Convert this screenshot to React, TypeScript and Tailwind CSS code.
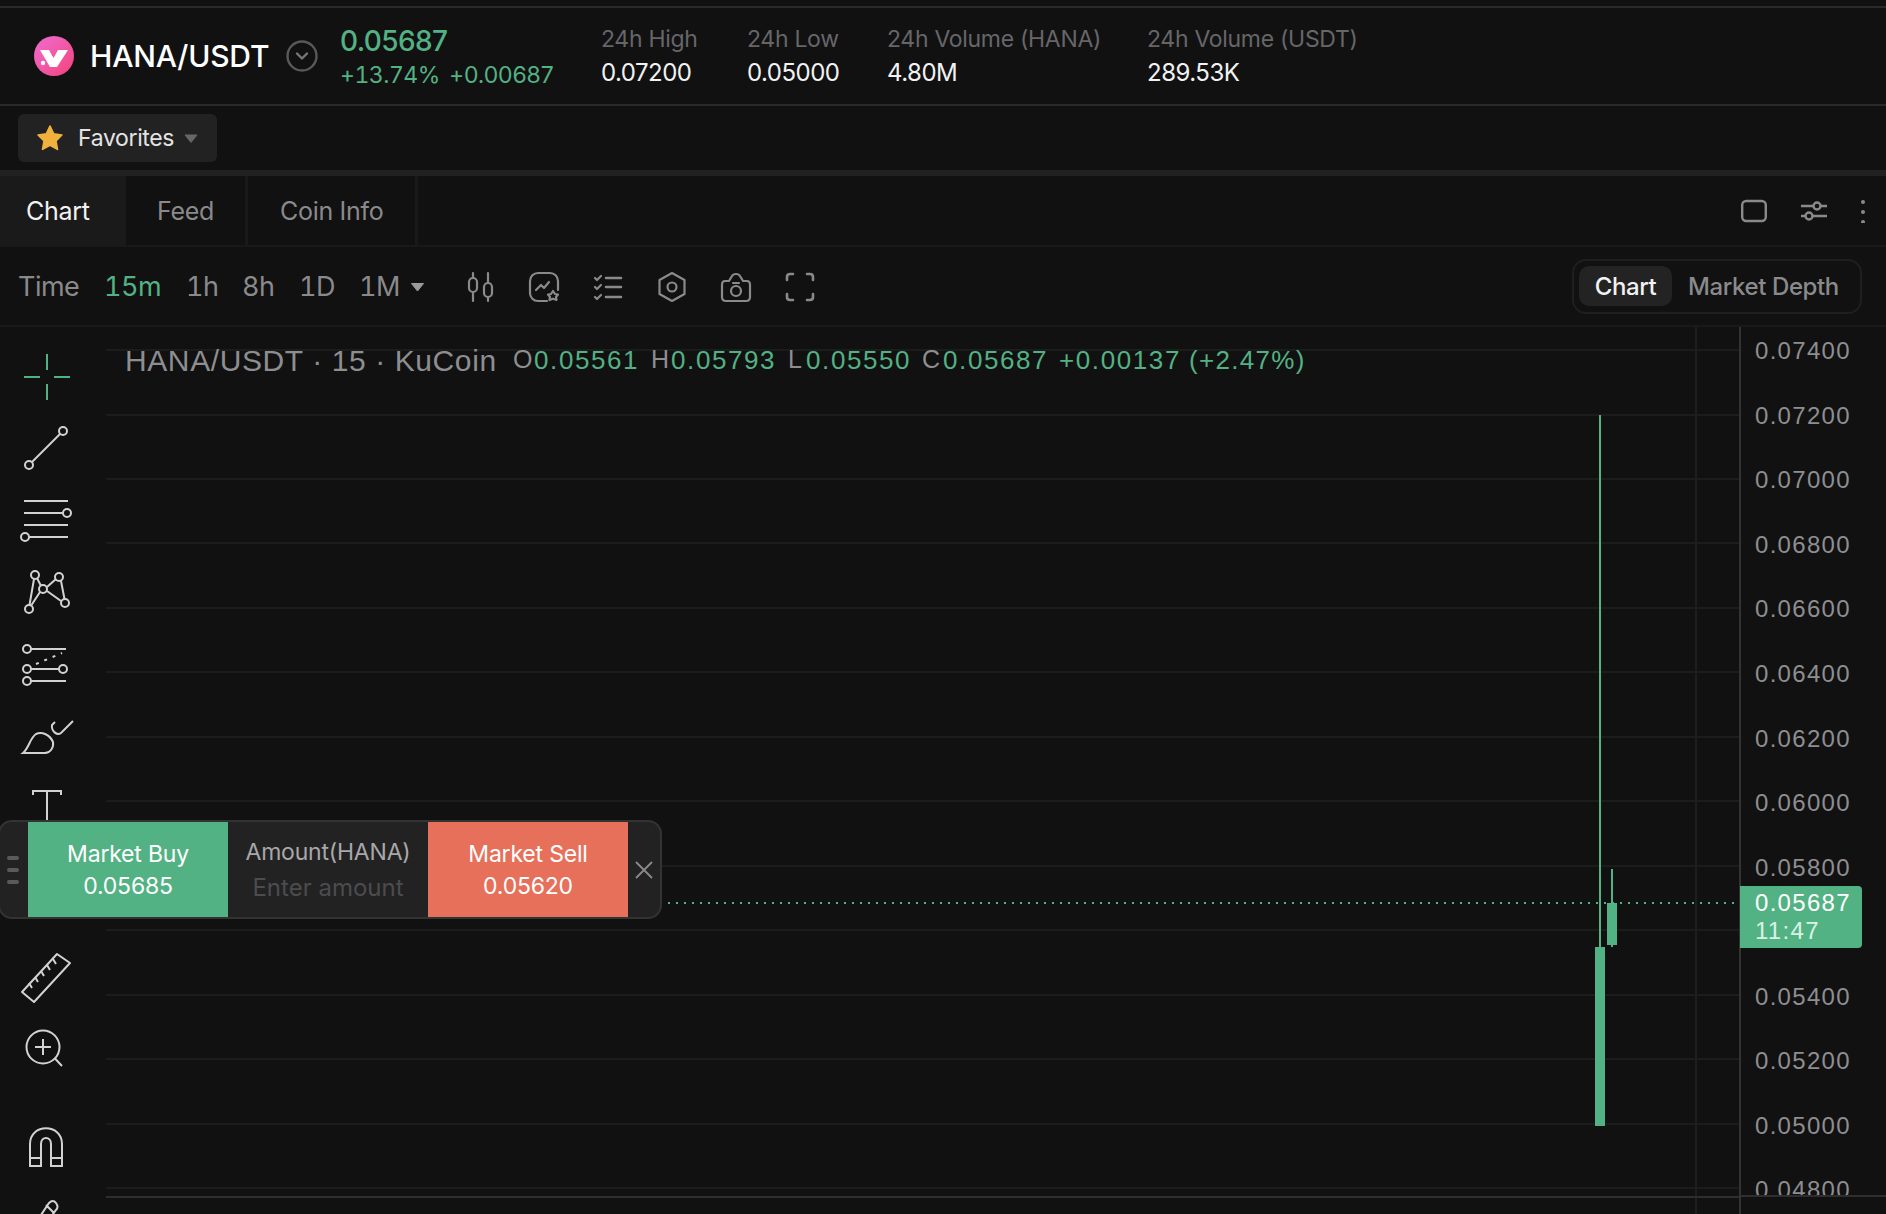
const GREEN = "#53b283";

const gridLines = [23, 88, 152, 216, 281, 345, 410, 474, 539, 603, 668, 732, 797, 861];
const axisLabels = ["0.07400", "0.07200", "0.07000", "0.06800", "0.06600", "0.06400", "0.06200", "0.06000", "0.05800", "", "0.05400", "0.05200", "0.05000", "0.04800"];

function Caret({ className }: { className: string }) {
  return (
    <svg viewBox="0 0 14 10" className={className} fill="currentColor">
      <path d="M1 1.500h12L7 9z" stroke="currentColor" strokeLinejoin="round" />
    </svg>
  );
}

function Stat({ label, value, className }: { label: string; value: string; className: string }) {
  return (
    <div className={className}>
      <div className="text-[23px] leading-[34px] text-[#666668] tracking-[-0.3px]">{label}</div>
      <div className="text-[24px] leading-[34px] text-[#f2f2f2] tracking-[-0.5px]">{value}</div>
    </div>
  );
}

function Header() {
  return (
    <div className="h-[98px] flex items-center border-b-[2px] border-[#2a2a2b]">
      <div className="ml-[34px] w-[40px] h-[40px] rounded-full bg-linear-to-br from-[#ee6bd2] to-[#f43f7a] shrink-0">
        <svg viewBox="0 0 40 40" className="w-[40px] h-[40px]" fill="#fff">
          <polygon points="6,14 15,14 19.500,22 24,14 34,14 23,31 16,31" />
          <circle cx="9" cy="27" r="2.200" />
        </svg>
      </div>
      <div className="ml-[16px] w-[178px] text-[30px] font-medium text-white tracking-[-0.2px] whitespace-nowrap">HANA/USDT</div>
      <svg viewBox="0 0 32 32" className="ml-[18px] w-[32px] h-[32px]" fill="none" stroke="#77777a" strokeWidth="2">
        <circle cx="16" cy="16" r="14.500" stroke="#59595b" strokeWidth="2.400" />
        <path d="M11 13.500l5 5 5-5" strokeWidth="2.400" strokeLinecap="round" strokeLinejoin="round" />
      </svg>
      <div className="ml-[22px] w-[261px]">
        <div className="text-[28px] leading-[38px] font-medium text-[#53b283] tracking-[-0.6px]">0.05687</div>
        <div className="flex text-[23px] leading-[30px] text-[#53b283]">
          <span className="w-[109px] tracking-[-0.5px] tabular-nums">+13.74%</span>
          <span className="tracking-[-0.15px]">+0.00687</span>
        </div>
      </div>
      <Stat label="24h High" value="0.07200" className="w-[146px]" />
      <Stat label="24h Low" value="0.05000" className="w-[140px]" />
      <Stat label="24h Volume (HANA)" value="4.80M" className="w-[260px]" />
      <Stat label="24h Volume (USDT)" value="289.53K" className="w-[260px]" />
    </div>
  );
}

function FavoritesRow() {
  return (
    <div className="h-[70px] pt-[8px] pl-[18px] border-b-[6px] border-[#212122]">
      <div className="w-[199px] h-[48px] rounded-[6px] bg-[#222223] flex items-center pl-[19px]">
        <svg viewBox="0 0 24 24" className="w-[26px] h-[26px]">
          <path d="M12 1l3.400 7.200 7.600 1-5.500 5.400 1.400 7.900-6.900-3.800-6.900 3.800 1.400-7.900L1 9.200l7.600-1z" fill="#f0b23c" stroke="#f0b23c" strokeWidth="1.500" strokeLinejoin="round" />
        </svg>
        <span className="ml-[15px] text-[23px] text-[#e4e4e4] tracking-[-0.35px]">Favorites</span>
        <Caret className="ml-[10px] w-[14px] h-[11px] text-[#666668]" />
      </div>
    </div>
  );
}

function Tabs() {
  return (
    <div className="h-[71px] flex items-stretch border-b-[2px] border-[#19191a] text-[25px] tracking-[-0.3px]">
      <div className="w-[126px] bg-[#1a1a1b] flex items-center pl-[26px] pt-[2px] text-[#f2f2f2]">Chart</div>
      <div className="w-[122px] flex items-center pl-[31px] pt-[2px] text-[#8a8a8c] border-r-[3px] border-[#19191a]">Feed</div>
      <div className="w-[170px] flex items-center pl-[32px] pt-[2px] text-[#8a8a8c] border-r-[3px] border-[#19191a]">Coin Info</div>
      <div className="ml-auto flex items-center pr-[20px]">
        <svg viewBox="0 0 26 24" className="w-[26px] h-[24px]" fill="none" stroke="#8a8a8c" strokeWidth="2.400">
          <rect x="1.200" y="2" width="23.600" height="20" rx="4" />
        </svg>
        <svg viewBox="0 0 28 24" className="ml-[33px] w-[28px] h-[24px]" fill="none" stroke="#8a8a8c" strokeWidth="2.400">
          <path d="M1 7h12M21 7h6M1 17h4M13 17h14" />
          <circle cx="17" cy="7" r="3.500" />
          <circle cx="9" cy="17" r="3.500" />
        </svg>
        <svg viewBox="0 0 6 24" className="ml-[32px] w-[6px] h-[24px]" fill="#8a8a8c">
          <circle cx="3" cy="3" r="2" />
          <circle cx="3" cy="13" r="2" />
          <circle cx="3" cy="23" r="2" />
        </svg>
      </div>
    </div>
  );
}

const tbStroke = { fill: "none", stroke: "#8a8a8c", strokeWidth: 2.2, strokeLinecap: "round", strokeLinejoin: "round" } as const;

function Toolbar() {
  return (
    <div className="h-[80px] flex items-center pl-[18px] pt-[2px] border-b-[2px] border-[#19191a] text-[27px] text-[#8a8a8c] tracking-[-0.5px] tabular-nums">
      <span className="w-[86px]">Time</span>
      <span className="w-[82px] text-[#53b283]">15m</span>
      <span className="w-[56px]">1h</span>
      <span className="w-[57px]">8h</span>
      <span className="w-[60px]">1D</span>
      <span className="w-[51px]">1M</span>
      <Caret className="w-[15px] h-[10px] text-[#9a9a9c]" />
      <div className="ml-[37px] flex gap-[28px]">
        <svg viewBox="0 0 36 36" className="w-[36px] h-[36px]" {...tbStroke}>
          <path d="M11 4v28M26 4v28" />
          <rect x="7" y="9" width="8" height="14" rx="4" fill="#111112" />
          <rect x="22" y="14" width="8" height="14" rx="4" fill="#111112" />
        </svg>
        <svg viewBox="0 0 36 36" className="w-[36px] h-[36px]" {...tbStroke}>
          <path d="M21 32H12a8 8 0 0 1-8-8V12a8 8 0 0 1 8-8h12a8 8 0 0 1 8 8v9" />
          <path d="M10 21l5-5 3 3 5-6" />
          <path d="M27 22l2 3 3 .5-2 2.500.5 3-3.500-1.300-3.500 1.300.5-3-2-2.500 3-.5z" />
        </svg>
        <svg viewBox="0 0 36 36" className="w-[36px] h-[36px]" {...tbStroke}>
          <path d="M5 9l2 2 4-4M5 18l2 2 4-4M5 28l2 2 4-4" />
          <path d="M16 9h15M16 18h15M16 28h15" strokeWidth="2.600" />
        </svg>
        <svg viewBox="0 0 36 36" className="w-[36px] h-[36px]" {...tbStroke}>
          <path d="M18 4l12.500 7v14L18 32 5.500 25V11z" />
          <circle cx="18" cy="18" r="4.500" />
        </svg>
        <svg viewBox="0 0 36 36" className="w-[36px] h-[36px]" {...tbStroke}>
          <path d="M7 12h4l3-5q1-2 4-2t4 2l3 5h4q3 0 3 4v12q0 4-4 4H8q-4 0-4-4V16q0-4 3-4z" />
          <path d="M15 14h6" />
          <circle cx="18" cy="22" r="5" />
        </svg>
        <svg viewBox="0 0 36 36" className="w-[36px] h-[36px]" {...tbStroke}>
          <path d="M5 11V8q0-3 3-3h3M25 5h3q3 0 3 3v3M5 25v3q0 3 3 3h3M25 31h3q3 0 3-3v-3" strokeWidth="2.600" />
        </svg>
      </div>
      <div className="ml-auto -mt-[2px] mr-[24px] w-[290px] h-[55px] rounded-[14px] border-[2px] border-[#1f1f20] flex items-center pl-[5px] text-[24px] font-medium tracking-[-0.4px]">
        <div className="w-[93px] h-[40px] rounded-[10px] bg-[#232324] text-[#f2f2f2] flex items-center justify-center pt-[1px]">Chart</div>
        <div className="ml-[16px] pt-[1px] whitespace-nowrap text-[#8a8a8c]">Market Depth</div>
      </div>
    </div>
  );
}

const toolProps = { viewBox: "0 0 94 72", className: "w-[94px] h-[72px] block", fill: "none", stroke: "#d2d2d2", strokeWidth: 2 };

function ToolRail() {
  return (
    <div className="w-[106px] shrink-0 pt-[14px]">
      <svg {...toolProps} stroke={GREEN}>
        <path d="M24 36h16M54 36h16M47 13v16M47 43v16" />
      </svg>
      <svg {...toolProps}>
        <path d="M32 49l28-28" />
        <circle cx="63" cy="18" r="4" />
        <circle cx="29" cy="52" r="4" />
      </svg>
      <svg {...toolProps}>
        <path d="M24 16h44M24 28h39M24 40h44M29 52h39" />
        <circle cx="67" cy="28" r="4" />
        <circle cx="25" cy="52" r="4" />
      </svg>
      <svg {...toolProps}>
        <path d="M34 22l-4.500 26M37 21l4 8M40 35l-8.500 13M47 30l9-8M61 24l3.500 18M47 34l14 10" />
        <circle cx="35" cy="18" r="4" />
        <circle cx="59" cy="20" r="4" />
        <circle cx="43" cy="32" r="4" />
        <circle cx="29" cy="52" r="4" />
        <circle cx="65" cy="46" r="4" />
      </svg>
      <svg {...toolProps}>
        <path d="M31 20h35M31 40h28M31 52h35" />
        <path d="M36 35l26-11" strokeDasharray="3 6" />
        <circle cx="27" cy="20" r="4" />
        <circle cx="27" cy="40" r="4" />
        <circle cx="63" cy="40" r="4" />
        <circle cx="27" cy="52" r="4" />
      </svg>
      <svg {...toolProps}>
        <path d="M23 52c6-5 7-15 13-19 6-3 14 1 17 8 1 6-3 11-8 11z" />
        <path d="M73 20L61 32c-4 3-10-2-9-8l3-3" />
      </svg>
      <svg {...toolProps}>
        <path d="M33 22v-4h28v4M47 18v50" />
      </svg>
      <div className="h-[97px]" />
      <svg {...toolProps}>
        <path d="M57 12l13 9-36 39-12-10z" strokeLinejoin="round" />
        <path d="M53 17l3 5M47 23l3 5M41 29l3 5M35 35l3 5M29 41l3 5" />
      </svg>
      <svg {...toolProps} className="w-[94px] h-[72px] block -mt-[2px]">
        <circle cx="43" cy="35" r="16.500" />
        <path d="M54.500 46l7.500 8M43 27v16M35 35h16" />
      </svg>
      <svg {...toolProps} className="w-[94px] h-[72px] block mt-[27px]">
        <path d="M30 55V33c0-21 32-21 32 0v22h-11V33c0-8-10-8-10 0v22zM30 47h11M51 47h11" />
      </svg>
      <svg {...toolProps} className="w-[94px] h-[72px] block -mt-[12px]">
        <path d="M33 56l16-24q4-4 7 0t0 7L42 58M46 34l8 8" />
      </svg>
    </div>
  );
}

function ChartPane() {
  return (
    <svg viewBox="0 0 1633 887" className="w-[1633px] h-[887px] shrink-0 block">
      {gridLines.map((y) => (
        <rect key={y} x="0" y={y - 1} width="1633" height="2" fill="#1c1c1d" />
      ))}
      <rect x="1589" y="0" width="2" height="887" fill="#1e1e1f" />
      <rect x="0" y="869" width="1633" height="2" fill="#2e2e2f" />
      <line x1="554" x2="1633" y1="576" y2="576" stroke={GREEN} strokeWidth="2" strokeDasharray="2 6" />
      <rect x="1493" y="88" width="2" height="532" fill={GREEN} />
      <rect x="1489" y="620" width="10" height="179" fill={GREEN} />
      <rect x="1505" y="542" width="2" height="78" fill={GREEN} />
      <rect x="1501" y="576" width="10" height="42" fill={GREEN} />
    </svg>
  );
}

function PriceAxis() {
  return (
    <div className="relative flex-1 border-l-[2px] border-[#333334] font-['Liberation_Sans',sans-serif]">
      <div className="h-[870px] overflow-hidden border-b-[2px] border-[#2e2e2f]">
        <div className="-mt-[8px]">
          {axisLabels.map((label, i) => (
            <div key={i} className="h-[64.55px] flex items-center pl-[14px] text-[24px] tracking-[1.3px] text-[#8e8e90]">
              {label}
            </div>
          ))}
        </div>
      </div>
      <div className="absolute -left-[1px] top-[559px] w-[122px] h-[62px] rounded-r-[4px] bg-[#53b283] pl-[15px] text-[24px] leading-[28px] pt-[3px] tracking-[1.3px] text-white">
        <div>0.05687</div>
        <div className="text-[#d9f2e5]">11:47</div>
      </div>
    </div>
  );
}

function Legend() {
  return (
    <div className="absolute left-[125px] top-[16px] flex items-center h-[34px] whitespace-nowrap font-['Liberation_Sans',sans-serif] text-[#53b283] text-[26px] tracking-[1.6px]">
      <span className="text-[30px] text-[#8e8e90] w-[388px] tracking-[0.6px]">HANA/USDT · 15 · KuCoin</span>
      <span className="text-[#8e8e90] w-[21px] text-[25px] tracking-normal">O</span>
      <span className="w-[117px]">0.05561</span>
      <span className="text-[#8e8e90] w-[20px] text-[25px] tracking-normal">H</span>
      <span className="w-[117px]">0.05793</span>
      <span className="text-[#8e8e90] w-[18px] text-[25px] tracking-normal">L</span>
      <span className="w-[116px]">0.05550</span>
      <span className="text-[#8e8e90] w-[21px] text-[25px] tracking-normal">C</span>
      <span className="w-[116px]">0.05687</span>
      <span className="w-[130px]">+0.00137</span>
      <span className="tracking-[1.3px]">(+2.47%)</span>
    </div>
  );
}

function QuickTrade() {
  return (
    <div className="absolute -left-[2px] top-[493px] w-[664px] h-[99px] rounded-[14px] border-[2px] border-[#333334] bg-[#222223] flex items-stretch text-[23px] tracking-[-0.2px] overflow-hidden">
      <div className="w-[28px] flex flex-col items-center justify-center gap-[8px] pr-[2px]">
        <div className="w-[12px] h-[4px] rounded-full bg-[#5a5a5c]" />
        <div className="w-[12px] h-[4px] rounded-full bg-[#5a5a5c]" />
        <div className="w-[12px] h-[4px] rounded-full bg-[#5a5a5c]" />
      </div>
      <div className="w-[200px] bg-[#53b283] text-white flex flex-col items-center justify-center leading-[32px]">
        <span>Market Buy</span>
        <span>0.05685</span>
      </div>
      <div className="w-[200px] flex flex-col items-center justify-center pt-[1px] leading-[36px]">
        <span className="text-[#a8a8aa]">Amount(HANA)</span>
        <span className="text-[#4c4c4e] text-[24px] tracking-normal">Enter amount</span>
      </div>
      <div className="w-[200px] bg-[#e7705b] text-white flex flex-col items-center justify-center leading-[32px]">
        <span>Market Sell</span>
        <span>0.05620</span>
      </div>
      <div className="flex-1 flex items-center justify-center">
        <svg viewBox="0 0 20 20" className="w-[20px] h-[20px]" fill="none" stroke="#8a8a8c" strokeWidth="1.800">
          <path d="M2 2l16 16M18 2L2 18" />
        </svg>
      </div>
    </div>
  );
}

export default function App() {
  return (
    <div className="w-[1886px] h-[1214px] overflow-hidden bg-[#111112] font-[Inter,sans-serif]">
      <div className="h-[8px] border-b-[2px] border-[#2a2a2b]" />
      <Header />
      <FavoritesRow />
      <Tabs />
      <Toolbar />
      <div className="relative flex h-[887px]">
        <ToolRail />
        <ChartPane />
        <PriceAxis />
        <Legend />
        <QuickTrade />
      </div>
    </div>
  );
}
